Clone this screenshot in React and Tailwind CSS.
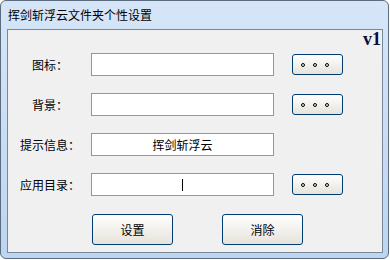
import React from 'react';

const font = { fontFamily: '"Noto Sans CJK SC", "Noto Sans", sans-serif' };

const DotsButton = () => (
  <button className="ml-[18px] w-[51px] h-[21px] rounded-[3px] border border-[#003c74] bg-gradient-to-b from-white to-[#e6e3da] flex items-center gap-[8px] pl-[8px]">
    <span className="w-[4px] h-[4px] rounded-full border border-black" />
    <span className="w-[4px] h-[4px] rounded-full border border-black" />
    <span className="w-[4px] h-[4px] rounded-full border border-black" />
  </button>
);

const Row = ({ label, children, dots }) => (
  <div className="flex items-center h-[23px]">
    <div className="w-[80px] pl-[4px] text-center text-[12px] leading-none text-black">{label}</div>
    <div className="ml-[3px] w-[183px] h-[23px] border border-[#7f9db9] bg-white flex items-center justify-center text-[12px] text-black">
      {children}
    </div>
    {dots && <DotsButton />}
  </div>
);

export default function App() {
  return (
    <div className="w-[390px] h-[260px] bg-white" style={font}>
      <div className="w-[389px] h-[259px] rounded-[6px] border border-[#5b6b80] bg-gradient-to-b from-[#d6e6f8] to-[#bdd5f0] flex flex-col pl-[6px] pr-[5px] pb-[5px]">
        <div className="h-[28px] flex items-center pl-[1px] pb-[1px] text-[12px] text-black">
          挥剑斩浮云文件夹个性设置
        </div>
        <div className="flex-1 border border-[#7a8797] bg-[#f0f0f0] flex flex-col">
          <div className="flex justify-end h-[18px] pr-[1px]">
            <span
              className="text-[18px] leading-[18px] font-bold text-[#0b0b3b]"
              style={{ fontFamily: '"Liberation Serif", serif' }}
            >
              v1
            </span>
          </div>
          <div className="flex flex-col gap-[17px] pt-[5px]">
            <Row label="图标：" dots />
            <Row label="背景：" dots />
            <Row label="提示信息：">挥剑斩浮云</Row>
            <Row label="应用目录：" dots>
              <span className="w-px h-[12px] bg-black" />
            </Row>
          </div>
          <div className="flex mt-[18px] pl-[84px] gap-[49px]">
            <button className="w-[81px] h-[31px] rounded-[3px] border border-[#003c74] bg-gradient-to-b from-white to-[#e6e3da] text-[12px] text-black">
              设置
            </button>
            <button className="w-[81px] h-[31px] rounded-[3px] border border-[#003c74] bg-gradient-to-b from-white to-[#e6e3da] text-[12px] text-black">
              消除
            </button>
          </div>
        </div>
      </div>
    </div>
  );
}
